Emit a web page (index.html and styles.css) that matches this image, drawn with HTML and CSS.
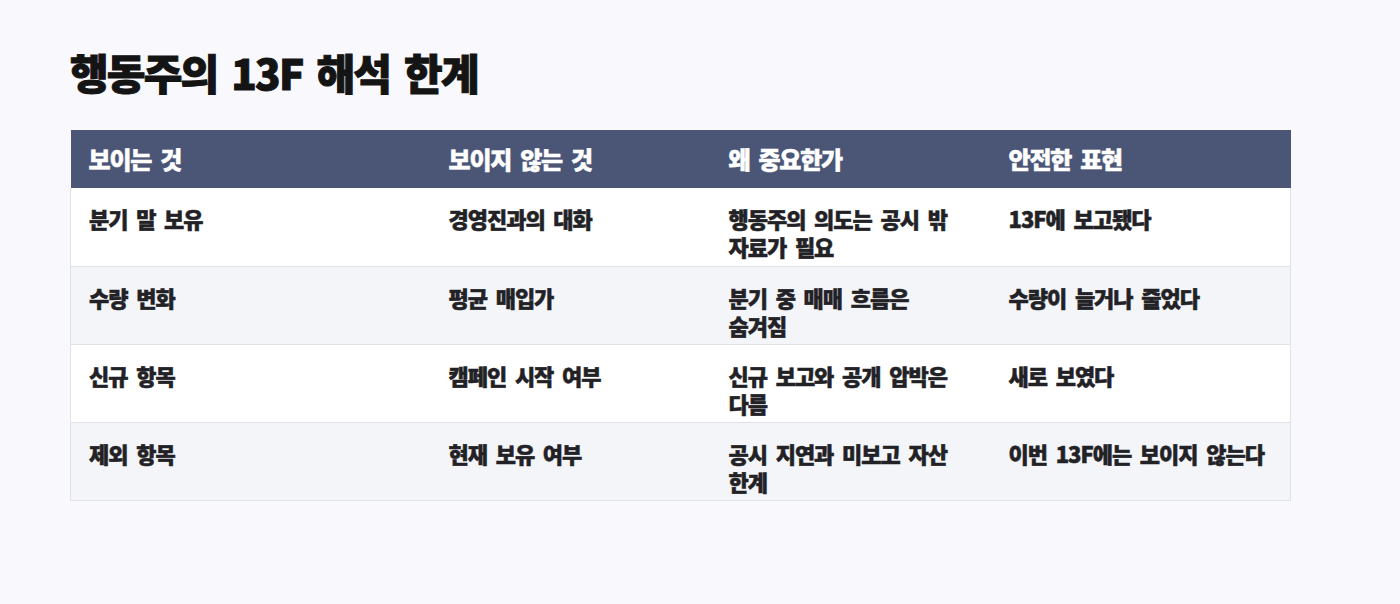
FILE: index.html
```html
<!DOCTYPE html>
<html lang="ko">
<head>
<meta charset="utf-8">
<link rel="stylesheet" href="styles.css">
</head>
<body>
<main class="page">
  <h1 class="title">행동주의 13F 해석 한계</h1>
  <table class="grid">
    <thead>
      <tr>
        <th class="c1">보이는 것</th>
        <th class="c2">보이지 않는 것</th>
        <th class="c3">왜 중요한가</th>
        <th class="c4">안전한 표현</th>
      </tr>
    </thead>
    <tbody>
      <tr>
        <td>분기 말 보유</td>
        <td>경영진과의 대화</td>
        <td>행동주의 의도는 공시 밖 자료가 필요</td>
        <td>13F에 보고됐다</td>
      </tr>
      <tr>
        <td>수량 변화</td>
        <td>평균 매입가</td>
        <td>분기 중 매매 흐름은 숨겨짐</td>
        <td>수량이 늘거나 줄었다</td>
      </tr>
      <tr>
        <td>신규 항목</td>
        <td>캠페인 시작 여부</td>
        <td>신규 보고와 공개 압박은 다름</td>
        <td>새로 보였다</td>
      </tr>
      <tr>
        <td>제외 항목</td>
        <td>현재 보유 여부</td>
        <td>공시 지연과 미보고 자산 한계</td>
        <td>이번 13F에는 보이지 않는다</td>
      </tr>
    </tbody>
  </table>
</main>
</body>
</html>
```

FILE: styles.css
```css
html, body {
  margin: 0;
  padding: 0;
  background: #f9f9fd;
}
body {
  font-family: "Noto Sans CJK KR", "Noto Sans", sans-serif;
  color: #1c1c1e;
}
.page {
  padding: 44px 110px 0 70px;
}
.title {
  margin: 0 0 30px 0;
  font-size: 42px;
  line-height: 56px;
  font-weight: 900;
  letter-spacing: -1.8px;
  word-spacing: 4px;
  color: #141414;
  -webkit-text-stroke: 1px #141414;
}
.grid {
  width: 1220px;
  border-collapse: collapse;
  table-layout: fixed;
}
.c1 { width: 360px; }
.c2 { width: 280px; }
.c3 { width: 280px; }
.c4 { width: 300px; }
th, td {
  box-sizing: border-box;
  text-align: left;
  font-weight: 900;
  word-break: keep-all;
}
th {
  background: #4b5677;
  color: #ffffff;
  height: 58px;
  padding: 0 18px;
  font-size: 24px;
  letter-spacing: -1.2px;
  word-spacing: 3.5px;
  line-height: 30px;
  vertical-align: middle;
  -webkit-text-stroke: 0.5px #ffffff;
}
td {
  height: 78px;
  padding: 16px 18px 0 18px;
  font-size: 22px;
  letter-spacing: -1px;
  word-spacing: 3.5px;
  line-height: 28px;
  vertical-align: top;
  border-bottom: 1px solid #e0e2ea;
  color: #222226;
  -webkit-text-stroke: 0.5px #222226;
}
tbody tr:nth-child(odd) td { background: #ffffff; }
tbody tr:nth-child(even) td { background: #f4f5f9; }
tbody tr td:first-child { border-left: 1px solid #e0e2ea; }
tbody tr td:last-child { border-right: 1px solid #e0e2ea; padding-right: 10px; }
```
